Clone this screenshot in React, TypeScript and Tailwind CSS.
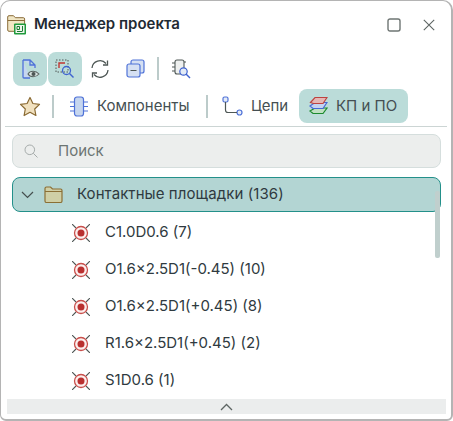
const pads = ['C1.0D0.6 (7)', 'O1.6×2.5D1(-0.45) (10)', 'O1.6×2.5D1(+0.45) (8)', 'R1.6×2.5D1(+0.45) (2)', 'S1D0.6 (1)']

function PadIcon() {
  return (
    <svg width="18" height="18" viewBox="0 0 18 18" fill="none" className="shrink-0">
      <path d="M0 0l4 4M18 0l-4 4M0 18l4-4M18 18l-4-4" stroke="#4f5755" strokeWidth="1.100" />
      <circle cx="9" cy="9" r="6.500" fill="#fbeeed" stroke="#c9504c" strokeWidth="1.300" />
      <circle cx="9" cy="9" r="3.500" fill="#b9302f" />
    </svg>
  )
}

function Divider() {
  return <div className="w-[2px] h-[23px] bg-[#bccbca] shrink-0" />
}

export default function App() {
  return (
    <div className="w-[453px] h-[421px] bg-white border border-[#b4b4b4] border-b-2 border-r-2 rounded-t-[10px] rounded-b-[6px] overflow-hidden flex flex-col text-[#2f3a40] font-['Inter',sans-serif] text-[15px]">

      {/* title */}
      <div className="h-[47px] mb-[3px] flex items-center pl-[6px] pr-[16px] shrink-0">
        <svg width="21" height="20" viewBox="0 0 21 20" fill="none" className="shrink-0">
          <path d="M.7 15V2a1.300 1.300 0 0 1 1.300-1.300h4.500l1.800 2h8A1.300 1.300 0 0 1 17.600 4v11a1.300 1.300 0 0 1-1.300 1.300H2A1.300 1.300 0 0 1 .7 15z" fill="#f1e6c4" stroke="#8a6d3b" strokeWidth="1" />
          <path d="M.7 5.500h17" stroke="#8a6d3b" strokeWidth="1" />
          <rect x="7" y="8.500" width="12" height="11" rx="1" fill="#1f9a3c" />
          <rect x="8.500" y="10" width="9" height="8" fill="#eef6ec" />
          <path d="M10 11.500h2.500v3H10zM15.500 11v5M10 16.500h5.500" stroke="#1d7a32" strokeWidth="1" />
        </svg>
        <span className="ml-[6px] font-semibold text-[#1f2a33]">Менеджер проекта</span>
        <svg width="14" height="14" viewBox="0 0 14 14" fill="none" className="ml-auto">
          <rect x="1" y="1" width="12" height="12" rx="2" stroke="#6e7573" strokeWidth="1.400" />
        </svg>
        <svg width="12" height="12" viewBox="0 0 12 12" fill="none" className="ml-[22px]">
          <path d="M.8.8l10.400 10.400M11.200.8L.8 11.200" stroke="#5d6563" strokeWidth="1.100" />
        </svg>
      </div>

      {/* toolbar */}
      <div className="h-[35px] flex items-center pl-[12px] shrink-0">
        <div className="w-[34px] h-[34px] rounded-[8px] bg-[#bbdcd9] flex items-center justify-center">
          <svg width="24" height="24" viewBox="0 0 24 24" fill="none">
            <path d="M5 3h7l5 5v3M5 3v17a1 1 0 0 0 1 1h6M12 3v5h5" stroke="#4f72d8" strokeWidth="1.300" fill="#c6d6ef" />
            <path d="M10 17c2-3.600 8-3.600 11 0-3 3.600-9 3.600-11 0z" fill="#d9e4e2" stroke="#5a6361" strokeWidth="1.100" />
            <circle cx="15.500" cy="17" r="2" fill="#4d5654" />
          </svg>
        </div>
        <div className="w-[34px] h-[34px] ml-[1px] rounded-[8px] bg-[#bbdcd9] flex items-center justify-center">
          <svg width="20" height="20" viewBox="0 0 20 20" fill="none">
            <rect x="1" y="1" width="12" height="12" stroke="#4e5755" strokeWidth="1" strokeDasharray="1.500 1.500" />
            <path d="M4 9V4h6" stroke="#c23431" strokeWidth="1.400" />
            <circle cx="11.500" cy="11.500" r="4" stroke="#3f63d0" strokeWidth="1.300" />
            <path d="M14.500 14.500l4 4" stroke="#3f63d0" strokeWidth="1.400" />
          </svg>
        </div>
        <svg width="20" height="20" viewBox="0 0 20 20" fill="none" className="ml-[8px]">
          <path d="M2 9a8 8 0 0 1 14-4.500M18 11a8 8 0 0 1-14 4.500" stroke="#4e5755" strokeWidth="1.300" />
          <path d="M17.500 1.500v4.500H13M2.500 18.500V14H7" stroke="#4e5755" strokeWidth="1.300" />
        </svg>
        <svg width="19" height="19" viewBox="0 0 19 19" fill="none" className="ml-[16px]">
          <rect x="5" y="1" width="13" height="13" rx="2" fill="#d5e0f3" stroke="#4f72d8" strokeWidth="1.200" />
          <rect x="1" y="5" width="13" height="13" rx="2" fill="#d5e0f3" stroke="#4f72d8" strokeWidth="1.200" />
          <path d="M4.500 11.500h6" stroke="#4e5755" strokeWidth="1.200" />
        </svg>
        <div className="ml-[12px]"><Divider /></div>
        <svg width="20" height="20" viewBox="0 0 20 20" fill="none" className="ml-[12px]">
          <rect x="4" y="1" width="9" height="14" rx="2" fill="#eef0ef" stroke="#4e5755" strokeWidth="1.100" />
          <path d="M1 4h3M1 8h3M1 12h3M13 3h2" stroke="#4e5755" strokeWidth="1.100" />
          <circle cx="12.500" cy="12.500" r="3.700" fill="#e3ebf6" stroke="#3f63d0" strokeWidth="1.200" />
          <path d="M15 15l4 4" stroke="#3f63d0" strokeWidth="1.400" />
        </svg>
      </div>

      {/* tabs */}
      <div className="h-[34px] mt-[3px] flex items-center shrink-0 text-[#454f52]">
        <svg width="22" height="21" viewBox="0 0 22 21" fill="none" className="ml-[18px]">
          <path d="M11 1.500l2.900 6 6.600.9-4.800 4.600 1.200 6.500-5.900-3.200-5.900 3.200 1.200-6.500L1.500 8.400l6.600-.9z" fill="#f1e1bf" stroke="#8a6a33" strokeWidth="1.200" strokeLinejoin="round" />
        </svg>
        <div className="ml-[11px]"><Divider /></div>
        <svg width="18" height="21" viewBox="0 0 18 21" fill="none" className="ml-[16px]">
          <rect x="4.500" y="1" width="9" height="19" rx="2.500" fill="#c6d6ef" stroke="#4f72d8" strokeWidth="1.200" />
          <path d="M0 6h4.500M0 10.500h4.500M0 15h4.500M13.500 6H18M13.500 10.500H18M13.500 15H18" stroke="#4f72d8" strokeWidth="1.200" />
        </svg>
        <span className="ml-[9px] w-[92px] whitespace-nowrap">Компоненты</span>
        <div className="ml-[17px]"><Divider /></div>
        <svg width="21" height="21" viewBox="0 0 21 21" fill="none" className="ml-[14px]">
          <rect x="1" y="1" width="5" height="5" rx="1.500" fill="#e4ebf7" stroke="#4f72d8" strokeWidth="1.200" />
          <rect x="15" y="14" width="5" height="5" rx="2.500" fill="#e4ebf7" stroke="#4f72d8" strokeWidth="1.200" />
          <path d="M3.500 6v8a2.500 2.500 0 0 0 2.500 2.500h9" stroke="#4e5755" strokeWidth="1.200" />
        </svg>
        <span className="ml-[8px] w-[37px] whitespace-nowrap">Цепи</span>
        <div className="ml-[11px] h-[34px] w-[109px] rounded-[8px] bg-[#bbdcd9] flex items-center pl-[10px]">
          <svg width="19" height="21" viewBox="0 0 19 21" fill="none" className="shrink-0">
            <path d="M1 15l5-3h12l-4 5.500H4z" fill="#bfe0c2" stroke="#1c8a2e" strokeWidth="1.200" />
            <path d="M1 10l5-3.500h12l-4 6H4z" fill="#c3d3f2" stroke="#4468d6" strokeWidth="1.200" />
            <path d="M1.500 6.500L6 1.500h12l-4 6H4.500z" fill="#e5b7b5" stroke="#bd4340" strokeWidth="1.200" />
          </svg>
          <span className="ml-[8px]">КП и ПО</span>
        </div>
      </div>

      <div className="h-[1px] mt-[3px] mx-[4px] bg-[#ccd5d4] shrink-0" />

      {/* search */}
      <div className="h-[34px] mt-[7px] ml-[11px] mr-[10px] rounded-[8px] bg-[#eceeed] border border-[#d5dedd] flex items-center pl-[11px] shrink-0">
        <svg width="14" height="14" viewBox="0 0 14 14" fill="none" className="shrink-0">
          <circle cx="5.800" cy="5.800" r="4.800" stroke="#a6acab" strokeWidth="1" />
          <path d="M9.300 9.300L13.500 13.500" stroke="#a6acab" strokeWidth="1" />
        </svg>
        <span className="ml-[20px] text-[#6c7573]">Поиск</span>
      </div>

      {/* tree */}
      <div className="relative flex-1 min-h-0 mt-[9px]">
        <div className="h-[35px] ml-[11px] mr-[10px] rounded-[8px] bg-[#b3d5d3] border border-[#23908a] flex items-center pl-[8px]">
          <svg width="13" height="8" viewBox="0 0 13 8" fill="none" className="shrink-0">
            <path d="M1 1l5.500 5.500L12 1" stroke="#46504f" strokeWidth="1.200" />
          </svg>
          <svg width="19" height="17" viewBox="0 0 19 17" fill="none" className="ml-[10px] shrink-0">
            <path d="M1 15V2.500A1.500 1.500 0 0 1 2.500 1h4l2 2h8A1.500 1.500 0 0 1 18 4.500V15a1.500 1.500 0 0 1-1.500 1.500h-14A1.500 1.500 0 0 1 1 15z" fill="#cfcfa6" stroke="#8b6f35" strokeWidth="1.200" />
            <path d="M1 5.500h17" stroke="#8b6f35" strokeWidth="1.100" />
          </svg>
          <span className="ml-[14px] tracking-[0.08px]">Контактные площадки (136)</span>
        </div>
        <div className="flex flex-col mt-[2px]">
          {pads.map((p) => (
            <div key={p} className="h-[37px] flex items-center pl-[71px]">
              <PadIcon />
              <span className="ml-[15px]">{p}</span>
            </div>
          ))}
        </div>
        <div className="absolute left-[434px] top-[14px] w-[5px] h-[67px] rounded-[2px] bg-[#c0cfcd]" />
      </div>

      {/* scroll down bar */}
      <div className="h-[15px] ml-[6px] mr-[5px] mb-[5px] bg-[#ebeded] flex items-center justify-center shrink-0">
        <svg width="13" height="8" viewBox="0 0 13 8" fill="none">
          <path d="M1 7l5.500-5.500L12 7" stroke="#5d6563" strokeWidth="1.300" />
        </svg>
      </div>
    </div>
  )
}
